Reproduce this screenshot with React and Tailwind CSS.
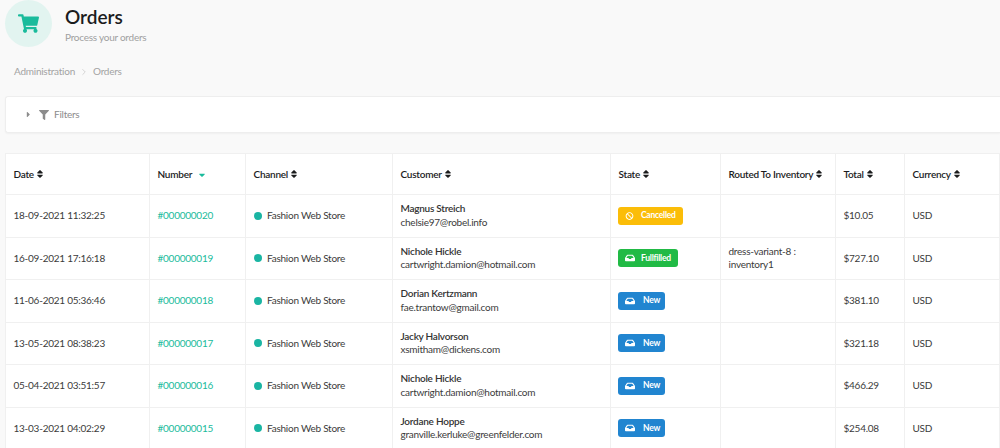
import React from 'react';
import { FaShoppingCart, FaFilter, FaSort, FaSortDown, FaInbox, FaBan, FaCaretRight } from 'react-icons/fa';
import { ChevronRight } from 'lucide-react';

const orders = [
  { date: '18-09-2021 11:32:25', number: '#000000020', name: 'Magnus Streich', email: 'chelsie97@robel.info', state: 'Cancelled', total: '$10.05' },
  { date: '16-09-2021 17:16:18', number: '#000000019', name: 'Nichole Hickle', email: 'cartwright.damion@hotmail.com', state: 'Fullfilled', routed: true, total: '$727.10' },
  { date: '11-06-2021 05:36:46', number: '#000000018', name: 'Dorian Kertzmann', email: 'fae.trantow@gmail.com', state: 'New', total: '$381.10' },
  { date: '13-05-2021 08:38:23', number: '#000000017', name: 'Jacky Halvorson', email: 'xsmitham@dickens.com', state: 'New', total: '$321.18' },
  { date: '05-04-2021 03:51:57', number: '#000000016', name: 'Nichole Hickle', email: 'cartwright.damion@hotmail.com', state: 'New', total: '$466.29' },
  { date: '13-03-2021 04:02:29', number: '#000000015', name: 'Jordane Hoppe', email: 'granville.kerluke@greenfelder.com', state: 'New', total: '$254.08' },
];

const Th = ({ label, sorted }) => (
  <th className="whitespace-nowrap border-r border-[#f0f0f0] pl-[7.5px] text-left font-semibold text-[#1b1c1d] last:border-r-0">
    <span className="flex items-center">
      {label}
      {sorted ? (
        <FaSortDown className="ml-[5px] mb-[3px] text-[10px] text-[#1abb9c]" />
      ) : (
        <FaSort className="ml-[1px] text-[10px]" />
      )}
    </span>
  </th>
);

const StateLabel = ({ state }) => {
  if (state === 'Cancelled') {
    return (
      <span className="inline-flex h-[18px] w-[65px] items-center rounded-[3px] bg-[#fbbd08] pl-[7px] text-[8.5px] font-bold text-white">
        <FaBan className="mr-[7px] w-[9px] text-[8px]" />
        <span>Cancelled</span>
      </span>
    );
  }
  if (state === 'Fullfilled') {
    return (
      <span className="inline-flex h-[18px] w-[60px] items-center rounded-[3px] bg-[#21ba45] pl-[7px] text-[8.5px] font-bold text-white">
        <FaInbox className="mr-[6px] w-[10px] text-[10px]" />
        Fullfilled
      </span>
    );
  }
  return (
    <span className="inline-flex h-[18px] w-[47px] items-center rounded-[3px] bg-[#2185d0] pl-[7px] text-[8.5px] font-bold text-white">
      <FaInbox className="mr-[8px] w-[10px] text-[10px]" />
      New
    </span>
  );
};

const App = () => {
  return (
    <div className="h-[448px] w-[1000px] overflow-hidden bg-[#f9f9f9] font-['Lato',sans-serif] text-[10px] tracking-[-0.25px] text-[#3b3b3b]">
      <div className="flex h-[47px] items-center pl-[5px]">
        <div className="flex h-[47px] w-[47px] items-center justify-center rounded-full bg-[#e2f4f0]">
          <FaShoppingCart className="text-[21px] text-[#1abb9c]" />
        </div>
        <div className="ml-[13px]">
          <div className="mt-[1px] text-[19px] font-semibold leading-[21px] tracking-normal text-[#1b1c1d]">Orders</div>
          <div className="mt-[4px] text-[10px] leading-[12px] text-[#a0a0a0]">Process your orders</div>
        </div>
      </div>

      <div className="mt-[18px] flex h-[13px] items-center pl-[14px] text-[10px] text-[#a3a3a3]">
        <span>Administration</span>
        <ChevronRight size={10} strokeWidth={1.5} className="mx-[4px] text-[#bdbdbd]" />
        <span>Orders</span>
      </div>

      <div className="ml-[5px] mt-[18px] flex h-[37px] items-center rounded-l-[3px] border border-r-0 border-[#eeeeee] bg-white pl-[18px] text-[10px] text-[#8c8c8c] shadow-[0_1px_2px_rgba(0,0,0,0.04)]">
        <FaCaretRight className="text-[9px]" />
        <FaFilter className="ml-[6px] text-[10px]" />
        <span className="ml-[5px]">Filters</span>
      </div>

      <table className="ml-[5px] mt-[20px] w-[994px] table-fixed border-collapse border border-[#f0f0f0] bg-white">
        <colgroup>
          <col className="w-[144px]" />
          <col className="w-[96px]" />
          <col className="w-[147px]" />
          <col className="w-[218px]" />
          <col className="w-[110px]" />
          <col className="w-[115px]" />
          <col className="w-[69px]" />
          <col className="w-[95px]" />
        </colgroup>
        <thead>
          <tr className="h-[41px] border-b border-[#f0f0f0]">
            <Th label="Date" />
            <Th label="Number" sorted />
            <Th label="Channel" />
            <Th label="Customer" />
            <Th label="State" />
            <Th label="Routed To Inventory" />
            <Th label="Total" />
            <Th label="Currency" />
          </tr>
        </thead>
        <tbody>
          {orders.map((order) => (
            <tr key={order.number} className="h-[42.5px] border-b border-[#f0f0f0]">
              <td className="border-r border-[#f0f0f0] pl-[7.5px]">{order.date}</td>
              <td className="border-r border-[#f0f0f0] pl-[7.5px] text-[#1abb9c]">{order.number}</td>
              <td className="border-r border-[#f0f0f0] pl-[7.5px]">
                <span className="flex items-center">
                  <span className="h-[8px] w-[8px] rounded-full bg-[#1ab5a3]" />
                  <span className="ml-[5.5px]">Fashion Web Store</span>
                </span>
              </td>
              <td className="border-r border-[#f0f0f0] pl-[7.5px] leading-[13.5px]">
                <div className="font-semibold text-[#333333]">{order.name}</div>
                <div>{order.email}</div>
              </td>
              <td className="border-r border-[#f0f0f0] pl-[7px]">
                <StateLabel state={order.state} />
              </td>
              <td className="border-r border-[#f0f0f0] pl-[7.5px] leading-[13.5px]">
                {order.routed && (
                  <>
                    <div>dress-variant-8 :</div>
                    <div>inventory1</div>
                  </>
                )}
              </td>
              <td className="border-r border-[#f0f0f0] pl-[7.5px]">{order.total}</td>
              <td className="pl-[7.5px]">USD</td>
            </tr>
          ))}
        </tbody>
      </table>
    </div>
  );
};

export default App;
